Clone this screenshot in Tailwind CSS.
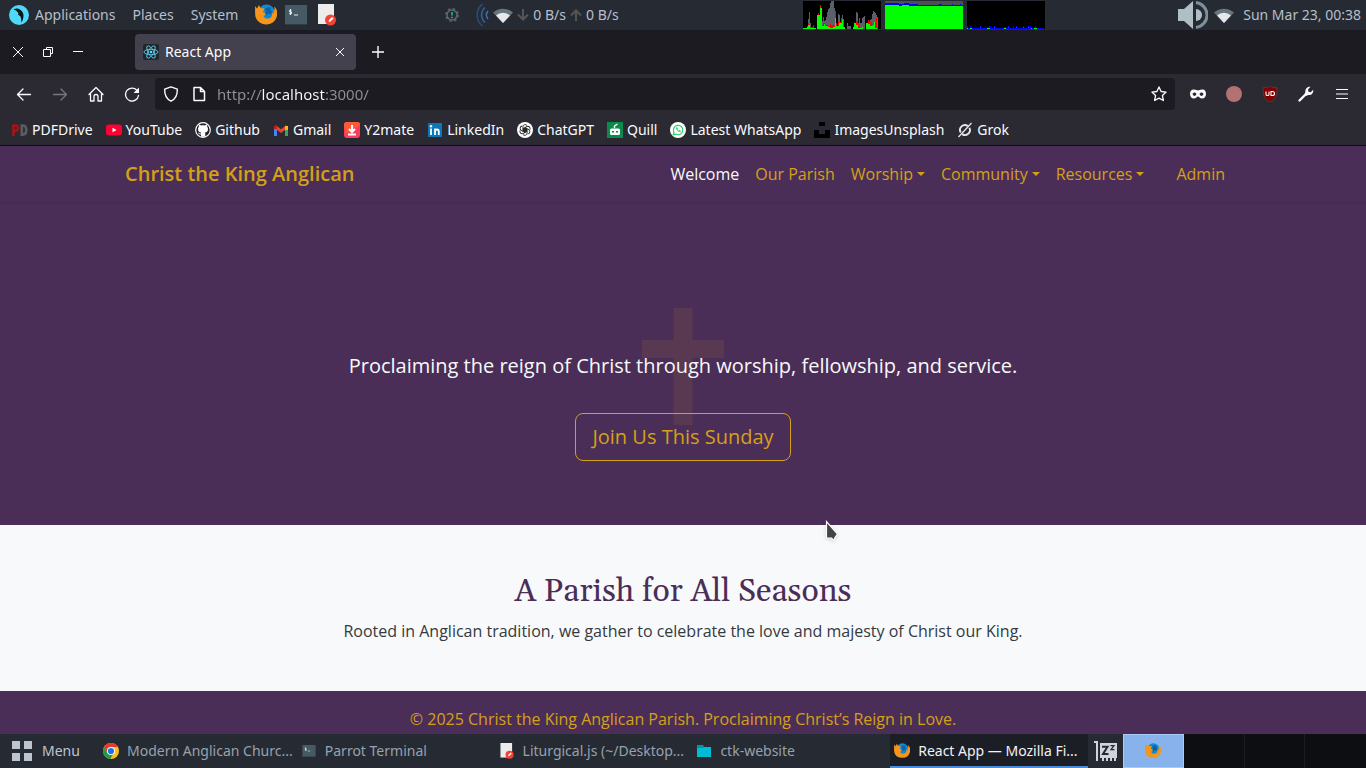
<!DOCTYPE html>
<html lang="en">
<head>
<meta charset="utf-8">
<title>React App</title>
<script src="https://cdn.jsdelivr.net/npm/@tailwindcss/browser@4"></script>
</head>
<body class="flex h-screen flex-col overflow-hidden bg-black font-['Noto_Sans',sans-serif] text-[14px] leading-5">

<svg class="hidden" aria-hidden="true">
  <defs>
    <symbol id="firefox" viewBox="0 0 22 22">
      <circle cx="11.500" cy="9" r="8.500" fill="#0b8ad8"/>
      <path d="M0 2l2 2.500L4 1l1.500 3 4 .5-1.500 3.500c1 1 2.500.5 3.500 1.500-.5 1.500-2 1.500-3 2.500.5 2 3 3 5 2.500 3-.5 4-3 3.500-6l2 1-.5-4 1.500 1-1-3.500C22 4 22.500 8 22 12a11 10 0 0 1-21.500 1C-.3 9 .3 5 0 2z" fill="#f7941a"/>
      <path d="M10 4.500l4-1.500 2 1-1 1.500 2 2-1.500 3-2-1-2 2-1.500-2 1-2z" fill="#0b62a8"/>
    </symbol>
    <symbol id="term" viewBox="0 0 22 20">
      <rect width="22" height="20" rx="1" fill="#455a64"/><rect y="19" width="22" height="1" fill="#2f3e46"/>
      <path d="M6.500 5.200H4.600v1.700h1.900v1.800H4.200M5.500 4v6M9 10h4" fill="none" stroke="#e6ecef" stroke-width="1"/>
    </symbol>
    <symbol id="doc" viewBox="0 0 18 22">
      <path d="M0 0h16v20H0z" fill="#ececec"/><circle cx="12.500" cy="16" r="5.500" fill="#f44336"/><path d="M10.500 18l.5-2 3-3 1.500 1.500-3 3z" fill="#fff"/>
    </symbol>
    <symbol id="wifi" viewBox="0 0 20 15">
      <path d="M0 4.500a15 15 0 0 1 20 0L10 15z" fill="#69747b"/><path d="M3 7.500a10 10 0 0 1 14 0L10 15z" fill="#e6e8ea"/>
    </symbol>
  </defs>
</svg>

<!-- Desktop panel -->
<header class="flex h-[30px] shrink-0 items-center bg-[#262b33] pr-[5px] pl-[9px] text-[#b6bfcb]">
  <nav class="flex items-center" aria-label="Desktop">
    <button class="flex items-center gap-1.5">
      <svg class="size-5" viewBox="0 0 20 20"><circle cx="10" cy="10" r="10" fill="#50d8fb"/><path d="M4.500 4.500C8 2.500 12 4 14 8c1 2.500.5 6-1.500 9.500C12 15 12.500 13.500 11.500 11.500L9 9.500l.500-1.500-2.500-2.500z" fill="#06161c"/></svg>
      Applications</button>
    <button class="ml-[17px]">Places</button>
    <button class="ml-[17px]">System</button>
    <button class="ml-[17px]" aria-label="Firefox"><svg class="size-[22px]"><use href="#firefox"/></svg></button>
    <button class="ml-2" aria-label="Terminal"><svg class="h-5 w-[22px]"><use href="#term"/></svg></button>
    <button class="ml-[11px]" aria-label="Editor"><svg class="h-[22px] w-[18px]"><use href="#doc"/></svg></button>
  </nav>
  <div class="ml-[109px] flex items-center">
    <svg class="size-3.5" viewBox="0 0 14 14"><circle cx="7" cy="7" r="5" fill="none" stroke="#5f6770" stroke-width="1.600"/><circle cx="7" cy="7" r="6.200" fill="none" stroke="#5f6770" stroke-width="1.500" stroke-dasharray="2.400 2.470"/><path d="M7 4v3.500M7 8.700v1.500" stroke="#1abc9c" stroke-width="1.600"/></svg>
    <svg class="ml-4 h-6 w-4" viewBox="0 0 16 24" fill="none" stroke-width="1.600"><path d="M7.500 1a14 14 0 0 0 0 22" stroke="#2a4a78"/><path d="M10 4.500a10 10 0 0 0 0 15" stroke="#33609e"/><path d="M13 8a6 6 0 0 0 0 8" stroke="#4272b4"/></svg>
    <svg class="ml-0.5 h-[15px] w-5"><use href="#wifi"/></svg>
    <svg class="ml-1 size-3" viewBox="0 0 12 12" fill="none" stroke="#555" stroke-width="2"><path d="M6 0v10M1 5.500l5 5 5-5"/></svg>
    <span class="ml-1">0 B/s</span>
    <svg class="ml-1 size-3" viewBox="0 0 12 12" fill="none" stroke="#555" stroke-width="2"><path d="M6 12V2M1 6.500l5-5 5 5"/></svg>
    <span class="ml-1">0 B/s</span>
  </div>
  <div class="ml-auto flex gap-1">
    <svg class="h-7 w-[78px] bg-black" viewBox="0 0 78 28" shape-rendering="crispEdges" aria-label="Processor load">
      <path fill="#5b5f6b" d="M5 28V18h1v-7h1v11h1v6zM19 28V20h1v-4h1v4h1v-1h1v-3h1v-5h1v-3h1v-1h1V2h1V0h3v7h1v11h1v10zM35 28V13h1v1h1v14zM39 28V14h1v4h1v10zM44 28v-6h1v3h3v3zM53 28V11h1v1h1v10h1v-5h1v5h2v-5h1v-1h1v-1h1v13zM67 28v-9h1v-1h1v-5h1v-3h1v1h1v1h1v2h1v2h1v13z"/>
      <path fill="#f00" d="M4 28v-3h1v-3h1v1h1v3h3v-2h1v4zM14 28V14h1v-2h1v2h1V4h1v3h1v21zM20 28v-6h2v2h3v1h2v-2h1v1h3v1h1V10h1v12h1v3h1v-4h3v-4h1v4h1v7zM52 28v-5h1v-3h2v2h1v2h1v4zM65 28v-9h1v2h3v4h3v-3h1v-5h1v11z"/>
      <path fill="#0f0" d="M0 28v-1h4v-1h1v-2h2v3h6v1zM14 28V14h3V7h2v21zM19 28v-3h2v-2h1v2h3v1h2v1h3v-1h2v-9h1v8h3v-3h3v-3h1v7h2v2h8v-2h1v-4h2v2h2v3h4v-1h1v2h3v-6h2v1h2v2h3v-1h1v-3h1v6h2v1z"/>
    </svg>
    <svg class="h-7 w-[78px]" viewBox="0 0 78 28" shape-rendering="crispEdges" aria-label="Memory use">
      <path fill="#4b5055" d="M0 0h78v28H0z"/><path fill="#00f" d="M0 28V2h14v1h5V2h5v1h9v1h21V3h3v1h10V3h1v1h7V3h1v1h2v24z"/><path fill="#0f0" d="M0 28V4h14v1h3V4h7v1h54v23z"/>
    </svg>
    <svg class="h-7 w-[78px] bg-black" viewBox="0 0 78 28" shape-rendering="crispEdges" aria-label="Network traffic">
      <path fill="#00f" d="M0 28v-3h1v2h2v-2h1v1h1v1h8v-2h1v2h6v-1h2v-1h2v2h3v-2h1v2h9v-1h2v1h2v-2h1v2h4v-2h1v2h2v-2h1v2h6v-2h1v2h4v-2h1v1h1v-1h1v2h3v-1h1v-1h1v2h8v1z"/>
      <path fill="#0f0" d="M0 27h1v1H0zM3 27h2v1H3zM20 27h3v1h-3zM37 27h2v1h-2zM64 27h1v1h-1zM67 27h3v1h-3z"/><path fill="#f00" d="M13 26h1v1h-1zM27 26h1v1h-1zM41 26h1v1h-1zM49 26h1v1h-1zM56 26h1v1h-1zM61 26h1v1h-1z"/>
    </svg>
  </div>
  <div class="ml-[133px] flex items-center">
    <svg class="h-7 w-[30px]" viewBox="0 0 30 28"><path d="M0 8h6l9-8v28l-9-8H0z" fill="#b0bec5"/><path d="M18 8v12a6 6 0 0 0 0-12z" fill="#b0bec5"/><path d="M18 1.500a12.600 12.600 0 0 1 0 25" fill="none" stroke="#7b909b" stroke-width="3"/></svg>
    <svg class="ml-1.5 h-[15px] w-5"><use href="#wifi"/></svg>
    <time class="ml-[9px]">Sun Mar 23, 00:38</time>
  </div>
</header>

<!-- Browser tab strip -->
<div class="flex h-11 shrink-0 items-center bg-[#1c1b22] text-[#fbfbfe]">
  <div class="flex items-center gap-[18px] pl-3">
    <button aria-label="Close window"><svg class="size-3" viewBox="0 0 12 12" stroke="currentColor" fill="none"><path d="M1 1l10 10M11 1L1 11"/></svg></button>
    <button aria-label="Restore window"><svg class="size-3" viewBox="0 0 12 12" stroke="currentColor" fill="none"><path d="M1.500 3.500h7v7h-7zM4.500 3.500v-2h6v6h-2"/></svg></button>
    <button aria-label="Minimize window"><svg class="size-3" viewBox="0 0 12 12" stroke="currentColor"><path d="M1 5.500h10"/></svg></button>
  </div>
  <div class="ml-[51px] flex h-9 w-[221px] items-center rounded bg-[#42414d] px-2">
    <svg class="size-4" viewBox="0 0 16 16"><rect width="16" height="16" rx="2" fill="#22252a"/><g fill="none" stroke="#61dafb" stroke-width=".8"><ellipse cx="8" cy="8" rx="7" ry="2.700"/><ellipse cx="8" cy="8" rx="7" ry="2.700" transform="rotate(60 8 8)"/><ellipse cx="8" cy="8" rx="7" ry="2.700" transform="rotate(120 8 8)"/></g><circle cx="8" cy="8" r="1.300" fill="#61dafb"/></svg>
    <span class="ml-1.5 leading-[22px]">React App</span>
    <button class="mr-1 ml-auto" aria-label="Close tab"><svg class="size-2" viewBox="0 0 8 8" stroke="currentColor"><path d="M0 0l8 8M8 0L0 8"/></svg></button>
  </div>
  <button class="ml-4" aria-label="New tab"><svg class="size-3" viewBox="0 0 12 12" stroke="currentColor" stroke-width="1.400"><path d="M6 0v12M0 6h12"/></svg></button>
</div>

<!-- Browser toolbar -->
<div class="flex h-10 shrink-0 items-center bg-[#2b2a33] text-[#fbfbfe]">
  <div class="flex items-center gap-5 pl-4">
    <button aria-label="Back"><svg class="size-4" viewBox="0 0 16 16" fill="none" stroke="currentColor" stroke-width="1.300" stroke-linecap="round" stroke-linejoin="round"><path d="M14.500 8.500H1.500M7 3L1.500 8.500 7 14"/></svg></button>
    <button class="text-[#77767d]" aria-label="Forward"><svg class="size-4" viewBox="0 0 16 16" fill="none" stroke="currentColor" stroke-width="1.300" stroke-linecap="round" stroke-linejoin="round"><path d="M1.500 8.500h13M9 3l5.500 5.500L9 14"/></svg></button>
    <button aria-label="Home"><svg class="size-4" viewBox="0 0 16 16" fill="none" stroke="currentColor" stroke-width="1.300" stroke-linejoin="round" stroke-linecap="round"><path d="M1 8.500l7-7 7 7M2.500 7.500V15h3.500v-4.500a2 2 0 0 1 4 0V15h3.500V7.500"/></svg></button>
    <button aria-label="Reload"><svg class="size-4" viewBox="0 0 16 16" fill="none" stroke="currentColor" stroke-width="1.300" stroke-linecap="round"><path d="M14.500 9.500A6.500 6.500 0 1 1 13 4.300"/><path d="M15 1.500v5.500H9.500z" fill="currentColor" stroke="none"/></svg></button>
  </div>
  <div class="ml-[15px] flex h-8 flex-1 items-center rounded bg-[#1c1b22] px-2">
    <svg class="size-4" viewBox="0 0 16 16" fill="none" stroke="currentColor" stroke-width="1.400" stroke-linejoin="round"><path d="M8 .8l6.300 2.400c.3 6-2 9.800-6.300 12C3.700 13 1.400 9.200 1.700 3.200z"/></svg>
    <svg class="ml-3 size-4" viewBox="0 0 16 16" fill="none" stroke="currentColor" stroke-width="1.500" stroke-linejoin="round"><path d="M3 1.500h6.500l4 4v9H3zM9.500 1.500v4h4"/></svg>
    <!-- The host part of the address is lit by a hard-edged gradient clipped to the text -->
    <input class="ml-2.5 min-w-0 flex-1 bg-[linear-gradient(90deg,#8f8f96_44px,#fbfbfe_44px,#fbfbfe_109px,#8f8f96_109px)] bg-clip-text text-[15px] text-transparent outline-none" type="text" aria-label="Address" value="http://localhost:3000/">
    <button aria-label="Bookmark this page"><svg class="size-4" viewBox="0 0 16 16" fill="none" stroke="currentColor" stroke-width="1.300" stroke-linejoin="round"><path d="M8 .9l2.100 4.600 5 .6-3.700 3.400 1 5L8 12.100 3.600 14.500l1-5L.9 6.100l5-.6z"/></svg></button>
  </div>
  <div class="flex items-center gap-5 pr-4 pl-[15px]">
    <button aria-label="Mask extension"><svg class="size-4" viewBox="0 0 16 16"><path fill="#fbfbfe" fill-rule="evenodd" d="M4 3.500c2 0 3 1 4 1s2-1 4-1c3 0 4 2 4 4.500s-1.500 4.500-4 4.500c-2 0-3-2-4-2s-2 2-4 2c-2.500 0-4-2-4-4.500s1-4.500 4-4.500zM2.500 8c1 2.500 3 2.500 4 0-1-2-3-2-4 0zM9.500 8c1 2.500 3 2.500 4 0-1-2-3-2-4 0z"/></svg></button>
    <button aria-label="Recorder extension"><svg class="size-4" viewBox="0 0 16 16"><circle cx="8" cy="8" r="8" fill="#b27272"/></svg></button>
    <button aria-label="uBlock Origin"><svg class="size-4" viewBox="0 0 16 16"><path d="M8 0c2 1.500 4.500 1.800 7 1.800 0 7-.5 11-7 14.200C1.500 12.800 1 8.800 1 1.800 3.500 1.800 6 1.500 8 0z" fill="#800000" stroke="#63494f" stroke-width=".6"/><path d="M4 5.500v3q0 1 1.500 1T7 8.500v-3M9 5.500v4h1.500a2 2 0 0 0 0-4z" fill="none" stroke="#fff" stroke-width="1.100"/></svg></button>
    <button aria-label="Developer tools"><svg class="size-4" viewBox="0 0 16 16"><path d="M1.500 14.500L9 7" stroke="#fbfbfe" stroke-width="2.400" stroke-linecap="round"/><path d="M12.500.8L10 3.500l.5 2.200 2.200.5 2.500-2.500c.5 3-1.500 5.300-4 5.300-1 0-2 0-3 1L6.500 8c1-1 .8-2 .8-3 .2-2.700 2.500-4.700 5.200-4.200z" fill="#fbfbfe"/></svg></button>
    <button aria-label="Menu"><svg class="size-4" viewBox="0 0 16 16" stroke="currentColor" stroke-width="1.200"><path d="M2 3.500h12M2 8h12M2 12.500h12"/></svg></button>
  </div>
</div>

<!-- Bookmarks -->
<nav class="flex h-8 shrink-0 items-center gap-[13px] border-b border-[#0c0c0d] bg-[#2b2a33] pl-3 text-[#fbfbfe]" aria-label="Bookmarks">
  <a href="#" class="flex items-center gap-1"><svg class="size-4" viewBox="0 0 16 16" fill="none" stroke-width="2.600"><path d="M1.500 14V3.500H4q2 0 2 2.500T4 8.700H2" stroke="#a51418"/><path d="M9.800 3.500v9.200h1q3.500 0 3.500-4.600t-3.500-4.600z" stroke="#5c5c60"/></svg>PDFDrive</a>
  <a href="#" class="flex items-center gap-1"><svg class="size-4" viewBox="0 0 16 16"><rect y="2.500" width="16" height="11" rx="3" fill="#ff0033"/><path d="M6.500 5.700v4.600l4-2.300z" fill="#fff"/></svg>YouTube</a>
  <a href="#" class="flex items-center gap-1"><svg class="size-4" viewBox="0 0 16 16"><circle cx="8" cy="8" r="7.300" fill="#222129" stroke="#fff" stroke-width="1.200"/><path d="M6 14.800v-2.300c-2 .4-2.600-1-3-1.700 1.200-.2 1.600 1 2.800.7l.4-1C4 10.300 3 9.200 3 7c0-1 .3-1.700.8-2.300-.2-.8-.1-1.500.1-2.200.9 0 1.600.5 2.200 1 1.200-.4 2.600-.4 3.800 0 .6-.5 1.300-1 2.200-1 .2.700.3 1.400.1 2.200.5.600.8 1.300.8 2.300 0 2.200-1 3.300-3.200 3.600.4.500.5 1 .5 1.800v2.400z" fill="#fff"/></svg>Github</a>
  <a href="#" class="flex items-center gap-1"><svg class="size-4" viewBox="0 0 16 16" stroke-width="3" fill="none"><path d="M2.500 14V5" stroke="#4285f4"/><path d="M13.500 14V5" stroke="#34a853"/><path d="M2 4.500l6 4.700 6-4.700" stroke="#ea4335"/><path d="M13.500 8V4" stroke="#fbbc04"/><path d="M2.500 7V4" stroke="#c5221f"/></svg>Gmail</a>
  <a href="#" class="flex items-center gap-1"><svg class="size-4" viewBox="0 0 16 16"><rect width="16" height="16" rx="3" fill="#ff3b5c"/><path d="M0 3a3 3 0 0 1 3-3h10a3 3 0 0 1 3 3L2 12z" fill="#ff5a36"/><path d="M8 3v6M5 7l3 3 3-3M4 12.500h8" stroke="#fff" stroke-width="2" fill="none"/></svg>Y2mate</a>
  <a href="#" class="flex items-center gap-1"><svg class="size-4" viewBox="0 0 16 16"><path d="M1 1h14v14H1z" fill="#0a77b8"/><path d="M4 6.500V13M8 13V6.500M8 9.500q.3-2 2-2t1.800 2V13" stroke="#fff" stroke-width="1.800" fill="none"/><circle cx="4" cy="4.200" r="1.200" fill="#fff"/></svg>LinkedIn</a>
  <a href="#" class="flex items-center gap-1"><svg class="size-4" viewBox="0 0 16 16"><circle cx="8" cy="8" r="8" fill="#fff"/><g fill="none" stroke="#222" stroke-width=".9"><path id="gp" d="M8 9.900L5.900 8.700V4.900a2.300 2.300 0 0 1 4.200-1.300M5.900 8.700L8 7.500"/><use href="#gp" transform="rotate(60 8 8)"/><use href="#gp" transform="rotate(120 8 8)"/><use href="#gp" transform="rotate(180 8 8)"/><use href="#gp" transform="rotate(240 8 8)"/><use href="#gp" transform="rotate(300 8 8)"/></g></svg>ChatGPT</a>
  <a href="#" class="flex items-center gap-1"><svg class="size-4" viewBox="0 0 16 16"><path d="M0 0h16v16H0z" fill="#0b8a4b"/><rect x="3" y="6.500" width="10" height="6.500" rx="1.500" fill="#fff"/><path d="M7.500 6V4l3-2" stroke="#fff" stroke-width="1.400" fill="none"/><path d="M5 9h2v1.500H5zM9 9h2v1.500H9z" fill="#0b8a4b"/></svg>Quill</a>
  <a href="#" class="flex items-center gap-1"><svg class="size-4" viewBox="0 0 16 16"><circle cx="8" cy="8" r="8" fill="#fff"/><path d="M3.200 12.800l.8-2.500a4.700 4.700 0 1 1 1.800 1.800z" fill="none" stroke="#25d366" stroke-width="1.200"/><path d="M6 5.500c0 2.500 2 4.500 4.500 4.500l.4-1.200-1.400-.7-.7.600q-1-.5-1.400-1.500l.5-.6-.6-1.400z" fill="#25d366"/></svg>Latest WhatsApp</a>
  <a href="#" class="flex items-center gap-1"><svg class="size-4" viewBox="0 0 16 16"><path d="M5 0h6v4H5zM0 8h5v4h6V8h5v8H0z" fill="#000"/></svg>ImagesUnsplash</a>
  <a href="#" class="flex items-center gap-1"><svg class="size-4" viewBox="0 0 16 16" fill="none" stroke="#e8e8ea" stroke-width="1.900"><path d="M10.800 4a4.900 4.900 0 0 0-7 6.600M5.200 12.100a4.900 4.900 0 0 0 7.200-6.200"/><path d="M1.500 15L14.500 1" stroke-width="1.300"/></svg>Grok</a>
</nav>

<!-- Web page -->
<main class="min-h-0 flex-1 overflow-hidden bg-[#4b2e58] font-['Open_Sans',sans-serif] text-base text-[#d4a017]">
  <nav class="relative shadow-sm" aria-label="Site">
    <div class="mx-auto flex h-14 max-w-[1140px] items-center justify-between px-3">
      <a href="#" class="text-xl font-semibold">Christ the King Anglican</a>
      <div class="flex items-center">
        <a href="#" class="px-2 text-[#f8f9fa]">Welcome</a>
        <a href="#" class="px-2">Our Parish</a>
        <button class="flex items-center gap-1 px-2">Worship<svg class="h-1 w-2" viewBox="0 0 8 4"><path d="M0 0h8L4 4z" fill="currentColor"/></svg></button>
        <button class="flex items-center gap-1 px-2">Community<svg class="h-1 w-2" viewBox="0 0 8 4"><path d="M0 0h8L4 4z" fill="currentColor"/></svg></button>
        <button class="flex items-center gap-1 px-2">Resources<svg class="h-1 w-2" viewBox="0 0 8 4"><path d="M0 0h8L4 4z" fill="currentColor"/></svg></button>
        <a href="#" class="ml-2 px-4">Admin</a>
      </div>
    </div>
  </nav>
  <section class="relative flex flex-col items-center px-4 pt-[149px] pb-16">
    <svg class="absolute top-[106px] left-1/2 h-[117px] w-[82px] -translate-x-1/2" viewBox="0 0 82 117" aria-hidden="true"><path d="M31.500 0h19v32H82v18H50.500v67h-19V50H0V32h31.500z" fill="#d4a017" fill-opacity=".1"/></svg>
    <p class="relative mb-8 text-xl leading-[30px] text-[#f8f9fa]">Proclaiming the reign of Christ through worship, fellowship, and service.</p>
    <button class="relative rounded-lg border border-[#d4a017] px-4 py-2 text-xl leading-[30px]">Join Us This Sunday</button>
  </section>
  <section class="bg-[#f8f9fa] px-4 py-12 text-center">
    <h2 class="mb-2 font-['Gelasio','Georgia','Liberation_Serif',serif] text-[32px] leading-[38px] text-[#4b2e58]">A Parish for All Seasons</h2>
    <p class="leading-6 text-[#343a40]">Rooted in Anglican tradition, we gather to celebrate the love and majesty of Christ our King.</p>
  </section>
  <footer class="py-4 text-center leading-6">© 2025 Christ the King Anglican Parish. Proclaiming Christ’s Reign in Love.</footer>
</main>

<!-- Taskbar -->
<footer class="flex h-[34px] shrink-0 items-center bg-[#262b33] text-[#98a1ae]">
  <button class="flex w-[99px] items-center gap-2.5 pl-3 text-[#bcc4d2]"><svg class="size-5" viewBox="0 0 20 20" fill="#bcc4d2"><path d="M0 0h8v8H0zM12 0h8v8h-8zM0 12h8v8H0zM12 12h8v8h-8z"/></svg>Menu</button>
  <div class="flex h-full min-w-0 flex-1">
    <button class="flex min-w-0 flex-1 items-center gap-2 px-1"><svg class="size-4 shrink-0" viewBox="0 0 16 16"><circle cx="8" cy="8" r="8" fill="#fbc116"/><path d="M1.070 4A8 8 0 0 1 14.930 4H8v4L4.540 10z" fill="#e33b2e"/><path d="M1.070 4L4.540 10 8 12l-.5 4A8 8 0 0 1 1.070 4z" fill="#229a49"/><path d="M7 16l4-6h-6z" fill="#229a49"/><circle cx="8" cy="8" r="4" fill="#fff"/><circle cx="8" cy="8" r="3.100" fill="#1a73e8"/></svg><span class="truncate">Modern Anglican Churc...</span></button>
    <button class="flex min-w-0 flex-1 items-center gap-2 px-1"><svg class="h-3 w-4 shrink-0"><use href="#term"/></svg><span class="truncate">Parrot Terminal</span></button>
    <button class="flex min-w-0 flex-1 items-center gap-2 px-1"><svg class="h-4 w-4 shrink-0"><use href="#doc"/></svg><span class="truncate">Liturgical.js (~/Desktop...</span></button>
    <button class="flex min-w-0 flex-1 items-center gap-2 px-1"><svg class="size-4 shrink-0" viewBox="0 0 16 16"><path d="M1 2h6l1 2h7v10H1z" fill="#0097a7"/><path d="M1 5h6l1-1h7v10H1z" fill="#00bcd4"/></svg><span class="truncate">ctk-website</span></button>
    <button class="flex min-w-0 flex-1 items-center gap-2 border-b-2 border-[#4a8bdc] bg-[#1b1e25] px-1 pt-0.5 text-[#f0f2f5]"><svg class="size-4 shrink-0"><use href="#firefox"/></svg><span class="truncate">React App — Mozilla Fi...</span></button>
  </div>
  <button class="flex w-[35px] justify-center" aria-label="Caffeine"><svg class="h-5 w-[23px]" viewBox="0 0 23 20"><path d="M0 0h4v20H2V2H0zM6 2h17v15h-1v3h-2v-3h-2v3h-2v-3h-2v3h-2v-3h-2v3H8v-3H6z" fill="#cfd4de"/><path d="M8 5.800h5.500L9 13h5.500" fill="none" stroke="#262b33" stroke-width="2"/><path d="M16.500 4.600h3.500l-3 4h3.500" fill="none" stroke="#262b33" stroke-width="1.300"/></svg></button>
  <div class="flex h-full w-[243px] bg-[#0d0e12]">
    <button class="flex w-1/4 items-center justify-center border border-[#a8cbf8] bg-[#87b2eb]" aria-label="Workspace 1"><svg class="size-4"><use href="#firefox"/></svg></button>
    <button class="w-1/4 border-r border-[#1b1d22]" aria-label="Workspace 2"></button>
    <button class="w-1/4 border-r border-[#1b1d22]" aria-label="Workspace 3"></button>
    <button class="w-1/4" aria-label="Workspace 4"></button>
  </div>
</footer>

<!-- Pointer -->
<svg class="pointer-events-none absolute top-[520px] left-[825px] h-6 w-4 drop-shadow" viewBox="0 0 16 24"><path d="M1.500 1.500v16.500h5l2.500 2.500 1-3 2.500-3.500z" fill="#444" stroke="#fff" stroke-width="1.200"/></svg>
</body>
</html>
